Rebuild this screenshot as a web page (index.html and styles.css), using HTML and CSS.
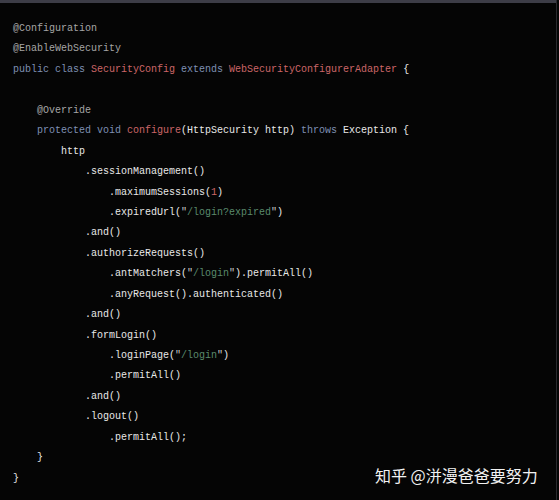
FILE: index.html
```html
<!DOCTYPE html>
<html>
<head>
<meta charset="utf-8">
<link rel="stylesheet" href="styles.css">
</head>
<body>
<div class="frame">
<div class="topbar"></div>
<div class="code">
<div class="ln"><span class="an">@Configuration</span></div>
<div class="ln"><span class="an">@EnableWebSecurity</span></div>
<div class="ln"><span class="kw">public class</span> <span class="ty">SecurityConfig</span> <span class="kw">extends</span> <span class="ty">WebSecurityConfigurerAdapter</span> {</div>
<div class="ln blank"></div>
<div class="ln i1"><span class="an">@Override</span></div>
<div class="ln i1"><span class="kw">protected void</span> <span class="ty">configure</span>(HttpSecurity http) <span class="kw">throws</span> Exception {</div>
<div class="ln i2">http</div>
<div class="ln i3">.sessionManagement()</div>
<div class="ln i4">.maximumSessions(<span class="ty">1</span>)</div>
<div class="ln i4">.expiredUrl(<span class="q">"</span><span class="st">/login?expired</span><span class="q">"</span>)</div>
<div class="ln i3">.and()</div>
<div class="ln i3">.authorizeRequests()</div>
<div class="ln i4">.antMatchers(<span class="q">"</span><span class="st">/login</span><span class="q">"</span>).permitAll()</div>
<div class="ln i4">.anyRequest().authenticated()</div>
<div class="ln i3">.and()</div>
<div class="ln i3">.formLogin()</div>
<div class="ln i4">.loginPage(<span class="q">"</span><span class="st">/login</span><span class="q">"</span>)</div>
<div class="ln i4">.permitAll()</div>
<div class="ln i3">.and()</div>
<div class="ln i3">.logout()</div>
<div class="ln i4">.permitAll();</div>
<div class="ln i1">}</div>
<div class="ln">}</div>
</div>
<div class="mark">知乎 @洴漫爸爸要努力</div>
</div>
</body>
</html>
```

FILE: styles.css
```css
html, body {
  margin: 0;
  padding: 0;
  background: #050505;
}
.frame {
  position: relative;
  width: 556px;
  height: 500px;
  border-right: 1px solid #2a2a2e;
  background: #050505;
  overflow: hidden;
}
.topbar {
  height: 3px;
  background: #3d3d47;
}
.code {
  padding: 16px 0 0 13px;
  font-family: "Liberation Mono", monospace;
  font-size: 10px;
  line-height: 20.45px;
  color: #e8e8e8;
}
.ln {
  height: 20.45px;
  white-space: pre;
}
.i1 { padding-left: 24px; }
.i2 { padding-left: 48px; }
.i3 { padding-left: 72px; }
.i4 { padding-left: 96px; }
.an { color: #a6a6a6; }
.kw { color: #7f90b4; }
.ty { color: #cc6668; }
.st { color: #5a8a6c; }
.q { color: #c8c8c8; }
.mark {
  position: absolute;
  left: 375px;
  top: 464px;
  font-family: "Noto Sans CJK SC", sans-serif;
  font-size: 16px;
  line-height: 22px;
  color: #f2f2f2;
  white-space: nowrap;
}
```
